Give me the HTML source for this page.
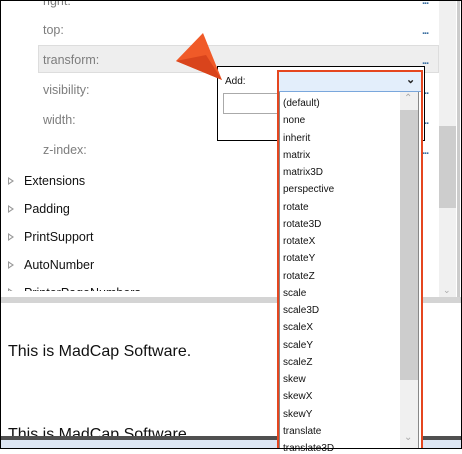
<!DOCTYPE html>
<html><head><style>
*{margin:0;padding:0;box-sizing:border-box}
body{width:462px;height:449px;overflow:hidden;background:#fff;font-family:"Liberation Sans",sans-serif;position:relative}
.a{position:absolute}
.p{position:absolute;left:43px;font-size:12.5px;color:#7d7d7d}
.d{position:absolute;left:422px;font-size:11px;color:#3a6ea0;letter-spacing:-1px;font-weight:bold}
.t{position:absolute;left:24px;font-size:12.5px;color:#111}
.tr{position:absolute;left:8px;width:0;height:0;border-left:6px solid #999;border-top:4px solid transparent;border-bottom:4px solid transparent}
.tr:after{content:"";position:absolute;left:-5px;top:-2px;border-left:3px solid #fff;border-top:2px solid transparent;border-bottom:2px solid transparent}
.i{position:absolute;left:283px;font-size:10px;color:#111}
</style></head><body>
<div class="a" style="left:0;top:0;width:462px;height:449px;border:1px solid #000;z-index:50;pointer-events:none"></div>
<div class="a" style="left:38px;top:45px;width:401px;height:28px;background:#eee;border:1px solid #ddd"></div>
<div class="p" style="top:-6px">right:</div>
<div class="p" style="top:23px">top:</div>
<div class="p" style="top:53px">transform:</div>
<div class="p" style="top:83px">visibility:</div>
<div class="p" style="top:113px">width:</div>
<div class="p" style="top:143px">z-index:</div>
<div class="d" style="top:-5px">...</div><div class="d" style="top:25px">...</div><div class="d" style="top:55px">...</div><div class="d" style="top:85px">...</div><div class="d" style="top:115px">...</div><div class="d" style="top:145px">...</div>
<div class="tr" style="top:177px"></div><div class="t" style="top:174px">Extensions</div>
<div class="tr" style="top:205px"></div><div class="t" style="top:202px">Padding</div>
<div class="tr" style="top:233px"></div><div class="t" style="top:230px">PrintSupport</div>
<div class="tr" style="top:261px"></div><div class="t" style="top:258px">AutoNumber</div>
<div class="a" style="left:0;top:284px;width:440px;height:7px;overflow:hidden"><div class="tr" style="top:4px"></div><div class="t" style="top:2px">PrinterPageNumbers</div></div>
<div class="a" style="left:439px;top:0;width:17px;height:297px;background:#f0f0f0"></div>
<div class="a" style="left:439px;top:126px;width:17px;height:82px;background:#cdcdcd"></div>
<div class="a" style="left:443px;top:285px;font-size:9px;color:#aaa">&#8964;</div>
<div class="a" style="left:0;top:297px;width:462px;height:6px;background:#d4d4d4"></div>
<div class="a" style="left:457px;top:0;width:3px;height:297px;background:#ccc"></div>
<div class="a" style="left:8px;top:343px;font-size:16px;color:#111">This is MadCap Software.</div>
<div class="a" style="left:0;top:424px;width:462px;height:12px;overflow:hidden"><div class="a" style="left:8px;top:2px;font-size:16px;color:#111">This is MadCap Software.</div></div>
<div class="a" style="left:0;top:436px;width:462px;height:4px;background:#505050"></div>
<div class="a" style="left:0;top:440px;width:462px;height:9px;background:#dde6f3"></div>
<div class="a" style="left:217px;top:66px;width:208px;height:75px;background:#fff;border:1px solid #000"></div>
<div class="a" style="left:225px;top:76px;font-size:10px;color:#111">Add:</div>
<div class="a" style="left:223px;top:93px;width:60px;height:21px;border:1px solid #aaa"></div>
<svg class="a" style="left:170px;top:30px" width="60" height="55"><polygon points="6,31 33,3 52,50" fill="#f05a28"/><polygon points="6,31 36,25 52,50" fill="#d9441c"/></svg>
<div class="a" style="left:277px;top:70px;width:146px;height:379px;border:2px solid #e5461f;border-bottom:none;background:#fff"></div>
<div class="a" style="left:279px;top:72px;width:142px;height:20px;background:#e3eefb;border-bottom:1px solid #7aa7dc"></div>
<div class="a" style="left:406px;top:73px;font-size:11px;font-weight:bold;color:#222">&#8964;</div>
<div class="a" style="left:279px;top:92px;width:140px;height:357px;border-left:1px solid #888;border-right:1px solid #888"></div>
<div class="a" style="left:400px;top:92px;width:18px;height:357px;background:#f0f0f0"></div>
<div class="a" style="left:400px;top:110px;width:18px;height:270px;background:#cdcdcd"></div>
<div class="a" style="left:404px;top:93px;font-size:10px;color:#aaa">&#8963;</div>
<div class="a" style="left:404px;top:432px;font-size:10px;color:#aaa">&#8964;</div>
<div class="i" style="top:98px">(default)</div>
<div class="i" style="top:115px">none</div>
<div class="i" style="top:133px">inherit</div>
<div class="i" style="top:150px">matrix</div>
<div class="i" style="top:167px">matrix3D</div>
<div class="i" style="top:184px">perspective</div>
<div class="i" style="top:202px">rotate</div>
<div class="i" style="top:219px">rotate3D</div>
<div class="i" style="top:236px">rotateX</div>
<div class="i" style="top:253px">rotateY</div>
<div class="i" style="top:271px">rotateZ</div>
<div class="i" style="top:288px">scale</div>
<div class="i" style="top:305px">scale3D</div>
<div class="i" style="top:322px">scaleX</div>
<div class="i" style="top:340px">scaleY</div>
<div class="i" style="top:357px">scaleZ</div>
<div class="i" style="top:374px">skew</div>
<div class="i" style="top:391px">skewX</div>
<div class="i" style="top:409px">skewY</div>
<div class="i" style="top:426px">translate</div>
<div class="i" style="top:443px">translate3D</div>
</body></html>
